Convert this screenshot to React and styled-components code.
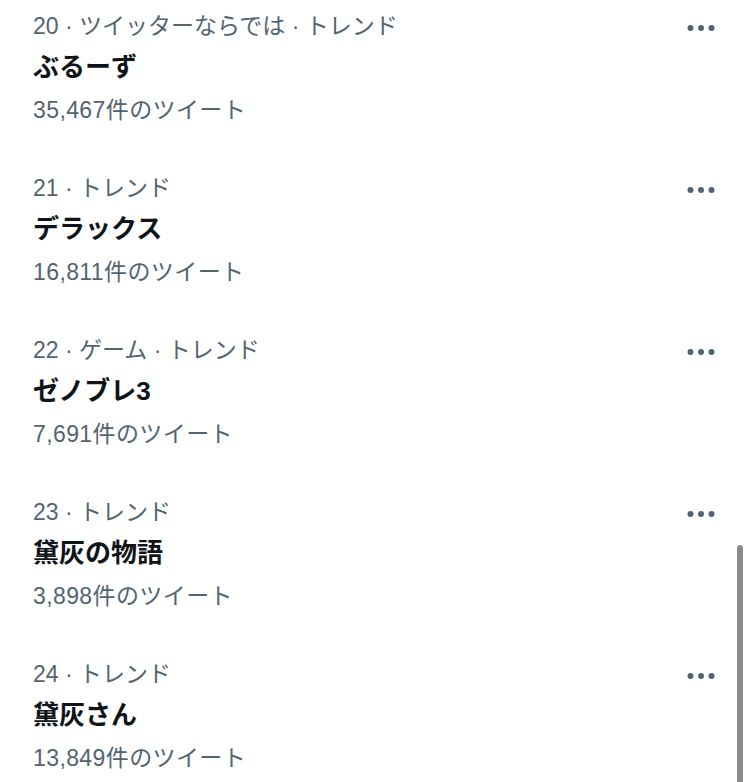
import React from "react";
import styled, { createGlobalStyle } from "styled-components";

const GlobalStyle = createGlobalStyle`
  html, body {
    margin: 0;
    padding: 0;
    background: #ffffff;
    overflow: hidden;
  }
  body {
    font-family: "Liberation Sans", "Noto Sans CJK JP", sans-serif;
    -webkit-font-smoothing: antialiased;
  }
`;

const Page = styled.div`
  position: relative;
  width: 750px;
  height: 782px;
  overflow: hidden;
`;

const List = styled.div`
  display: flex;
  flex-direction: column;
`;

const Row = styled.div`
  display: flex;
  justify-content: space-between;
  align-items: flex-start;
  padding: 12px 31px 38px 33px;
`;

const Body = styled.div`
  display: flex;
  flex-direction: column;
`;

const Meta = styled.div`
  font-size: 23px;
  line-height: 28px;
  color: #536471;
`;

const Title = styled.div`
  margin-top: 6px;
  font-size: 26px;
  line-height: 42px;
  font-weight: 700;
  color: #0f1419;
`;

const Count = styled.div`
  margin-top: 8px;
  font-size: 23px;
  line-height: 28px;
  letter-spacing: 0.4px;
  color: #536471;
`;

const MoreButton = styled.div`
  width: 36px;
  height: 36px;
  margin-top: -2px;
  color: #536471;
  display: flex;
  align-items: center;
  justify-content: center;
`;

const Scrollbar = styled.div`
  position: absolute;
  right: 7px;
  top: 545px;
  width: 6px;
  height: 250px;
  border-radius: 3px;
  background: #8a8a8a;
`;

const MoreIcon = () => (
  <svg width="36" height="36" viewBox="0 0 24 24" fill="currentColor">
    <circle cx="5" cy="12" r="2" />
    <circle cx="12" cy="12" r="2" />
    <circle cx="19" cy="12" r="2" />
  </svg>
);

const trends = [
  { rank: 20, category: "ツイッターならでは", name: "ぶるーず", count: "35,467" },
  { rank: 21, name: "デラックス", count: "16,811" },
  { rank: 22, category: "ゲーム", name: "ゼノブレ3", count: "7,691" },
  { rank: 23, name: "黛灰の物語", count: "3,898" },
  { rank: 24, name: "黛灰さん", count: "13,849" },
];

const App = () => (
  <Page>
    <GlobalStyle />
    <List>
      {trends.map((t) => (
        <Row key={t.rank}>
          <Body>
            <Meta>
              {t.rank} · {t.category ? `${t.category} · ` : ""}トレンド
            </Meta>
            <Title>{t.name}</Title>
            <Count>{t.count}件のツイート</Count>
          </Body>
          <MoreButton>
            <MoreIcon />
          </MoreButton>
        </Row>
      ))}
    </List>
    <Scrollbar />
  </Page>
);

export default App;
